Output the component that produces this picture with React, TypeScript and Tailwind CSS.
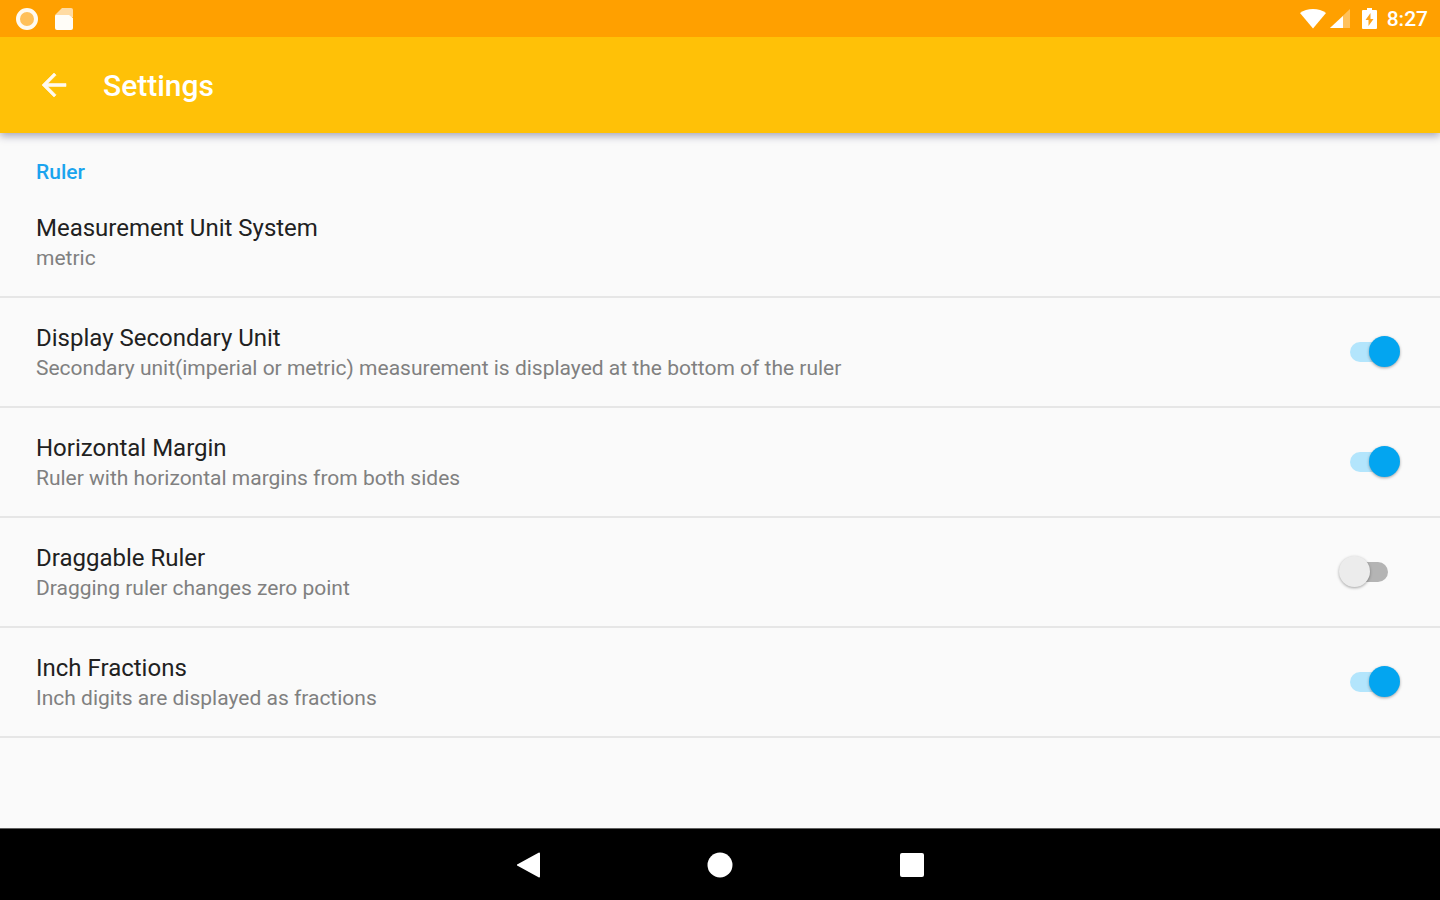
import { useState } from "react";

type Setting = { id: string; title: string; summary: string; on: boolean };

const initial: Setting[] = [
  {
    id: "secondary",
    title: "Display Secondary Unit",
    summary: "Secondary unit(imperial or metric) measurement is displayed at the bottom of the ruler",
    on: true,
  },
  { id: "margin", title: "Horizontal Margin", summary: "Ruler with horizontal margins from both sides", on: true },
  { id: "drag", title: "Draggable Ruler", summary: "Dragging ruler changes zero point", on: false },
  { id: "fractions", title: "Inch Fractions", summary: "Inch digits are displayed as fractions", on: true },
];

const StatusBar = () => (
  <div className="relative z-10 flex h-[37px] items-center justify-between bg-[#ffa000] pl-4 pr-3 text-white">
    <div className="flex items-center gap-4">
      <svg width="22" height="24" viewBox="0 0 22 24" aria-hidden="true">
        <circle cx="11" cy="12" r="9" fill="#ffc05a" stroke="#fffaf0" strokeWidth="4" />
      </svg>
      <svg width="20" height="24" viewBox="0 0 20 24" aria-hidden="true">
        <path d="M8 1h9a2 2 0 0 1 2 2v7H1V8z" fill="#ffdba3" />
        <path d="M2 8h13l4 3v10a2 2 0 0 1-2 2H3a2 2 0 0 1-2-2V9z" fill="#fffdf8" />
      </svg>
    </div>
    <div className="flex items-center">
      <svg width="26" height="24" viewBox="0 0 26 24" fill="#fff" aria-hidden="true">
        <path d="M13 21.500 0 6C3.500 3.500 8 2 13 2s9.500 1.500 13 4z" />
      </svg>
      <svg className="ml-1" width="20" height="24" viewBox="0 0 20 24" aria-hidden="true">
        <path d="M20 2v19H0z" fill="#ffc15c" />
        <path d="M13 9v12H0z" fill="#fff" />
      </svg>
      <svg className="ml-3" width="15" height="24" viewBox="0 0 15 24" aria-hidden="true">
        <path d="M5 1h5v2h4a1 1 0 0 1 1 1v17a1 1 0 0 1-1 1H1a1 1 0 0 1-1-1V4a1 1 0 0 1 1-1h4z" fill="#fff" />
        <path d="M8.500 6v6H11.500L6.500 19v-6H3.500z" fill="#ffa51a" />
      </svg>
      <span className="ml-2.5 text-[21px] font-medium leading-6">8:27</span>
    </div>
  </div>
);

const AppBar = () => (
  <header className="relative flex h-24 items-center bg-[#ffc107] pl-9 text-white shadow-[0_3px_8px_rgba(40,40,90,0.4)]">
    <button type="button" aria-label="Back" className="flex size-9 items-center justify-center">
      <svg width="38" height="38" viewBox="0 0 24 24" fill="#fffaf0" stroke="#fffaf0" strokeWidth="0.4" aria-hidden="true">
        <path d="M20 11H7.830l5.590-5.590L12 4l-8 8 8 8 1.410-1.410L7.830 13H20z" />
      </svg>
    </button>
    <h1 className="ml-[31px] pt-0.5 text-[30px] font-medium leading-9">Settings</h1>
  </header>
);

const RowText = ({ title, summary }: { title: string; summary: string }) => (
  <span className="flex flex-col text-left">
    <span className="text-2xl text-[#212121]">{title}</span>
    <span className="text-[21px] leading-7 text-[#808080]">{summary}</span>
  </span>
);

const rowClass =
  "flex w-full items-center justify-between border-b-2 border-[#e6e6e6] py-6 pl-9 pr-10";

export default function App() {
  const [settings, setSettings] = useState(initial);

  const toggle = (id: string) =>
    setSettings(settings.map((s) => (s.id === id ? { ...s, on: !s.on } : s)));

  return (
    <div className="flex min-h-screen flex-col bg-[#fafafa] font-['Roboto',sans-serif]">
      <StatusBar />
      <AppBar />
      <main className="flex-1">
        <h2 className="px-9 pb-0.5 pt-[25px] text-[21px] font-medium leading-7 text-[#1ba4ee]">Ruler</h2>
        <button type="button" className={rowClass}>
          <RowText title="Measurement Unit System" summary="metric" />
        </button>
        {settings.map((s) => (
          <label key={s.id} htmlFor={s.id} className={rowClass}>
            <RowText title={s.title} summary={s.summary} />
            <input
              id={s.id}
              type="checkbox"
              role="switch"
              checked={s.on}
              onChange={() => toggle(s.id)}
              className="relative h-8 w-[61px] shrink-0 appearance-none before:absolute before:left-[11px] before:top-1.5 before:h-5 before:w-[38px] before:rounded-full before:bg-[#b4b4b4] after:absolute after:left-0 after:top-0 after:size-[31px] after:rounded-full after:bg-[#ececec] after:shadow-[0_1px_3px_rgba(0,0,0,0.35)] checked:before:bg-[#b3e5fc] checked:after:left-[30px] checked:after:bg-[#03a5f0]"
            />
          </label>
        ))}
      </main>
      <nav className="flex h-[72px] items-center justify-center gap-36 border-t border-[#606060] bg-black">
        <button type="button" aria-label="Back" className="flex size-12 items-center justify-center">
          <svg width="26" height="26" viewBox="0 0 26 26" fill="#fff" aria-hidden="true">
            <path d="M25 1.500v23a1 1 0 0 1-1.500.8L3 14a1 1 0 0 1 0-2L23.500.8A1 1 0 0 1 25 1.500z" />
          </svg>
        </button>
        <button type="button" aria-label="Home" className="flex size-12 items-center justify-center">
          <svg width="26" height="26" viewBox="0 0 26 26" fill="#fff" aria-hidden="true">
            <circle cx="13" cy="13" r="12.500" />
          </svg>
        </button>
        <button type="button" aria-label="Recent apps" className="flex size-12 items-center justify-center">
          <svg width="26" height="26" viewBox="0 0 26 26" fill="#fff" aria-hidden="true">
            <rect x="1" y="1" width="24" height="24" rx="2" />
          </svg>
        </button>
      </nav>
    </div>
  );
}
